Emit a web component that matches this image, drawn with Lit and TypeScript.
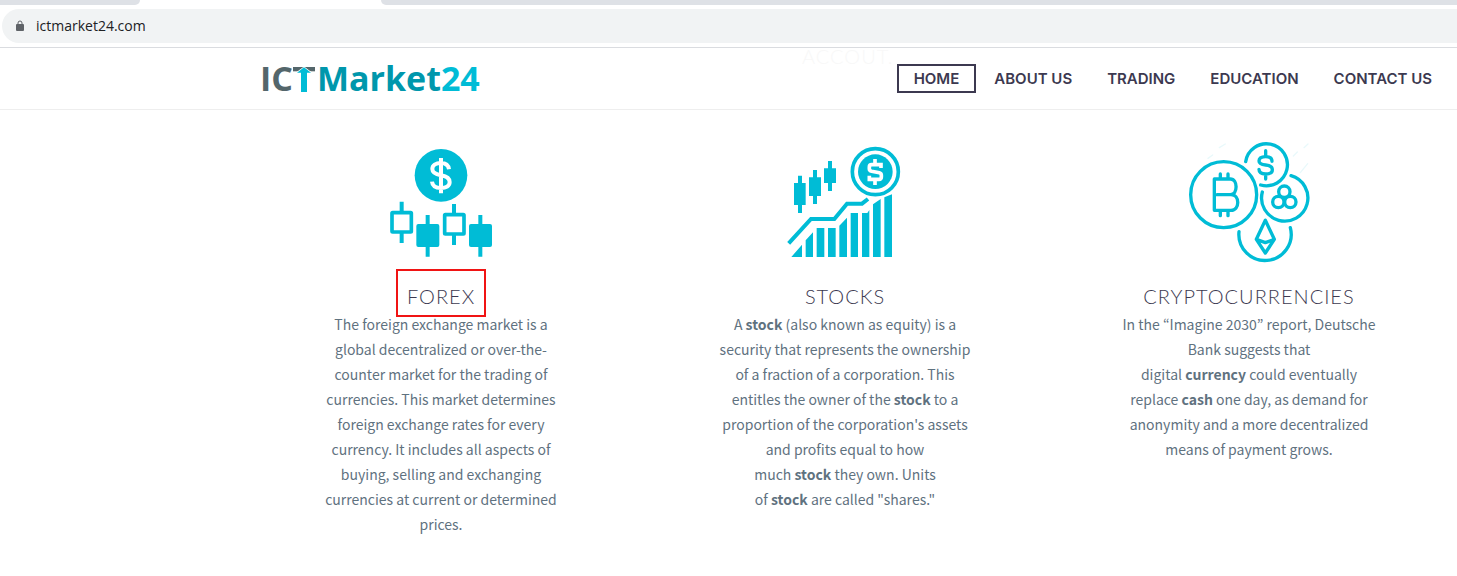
import { LitElement, html, css, svg } from "lit";
import { customElement } from "lit/decorators.js";

const forexIcon = svg`
  <svg class="icon" width="122" height="125" viewBox="0 0 366 375" fill="#00bcd6" aria-hidden="true">
    <circle cx="183" cy="106" r="79" />
    <path d="M207 88C205 73 194 69 183 69C167 69 157 76 157 87C157 99 167 103 183 106C199 109 209 114 209 126C209 138 198 144 183 144C167 144 157 137 156 125M183 54V160" fill="none" stroke="#fff" stroke-width="12" />
    <g fill="none" stroke="#00bcd6" stroke-width="10">
      <rect x="36" y="218" width="58" height="58" rx="2" stroke-width="11" />
      <path d="M65 185V216M65 278V309M222 192V222M222 284V315M143 225V350M301 225V350" stroke-width="12" />
      <rect x="194" y="224" width="58" height="58" rx="2" stroke-width="11" />
    </g>
    <rect x="109" y="252" width="69" height="69" rx="6" />
    <rect x="267" y="252" width="69" height="69" rx="6" />
  </svg>`;

const stocksIcon = svg`
  <svg class="icon" width="130" height="125" viewBox="0 0 390 375" fill="#00bcd6" aria-hidden="true">
    <path d="M54 107h12v22h11v66H66v24H54v-24H42v-66h12zM99 90h12v22h12v56h-12v24H99v-24H87v-56h12zM144 63h12v22h12v44h-12v24h-12v-24h-12V85h12z" />
    <path d="M26 310L93 237H163L201 191H246L264 177" fill="none" stroke="#00bcd6" stroke-width="12" />
    <path d="M34 351L66 314V351ZM77 301L99 277V351H77ZM110 264H133V351H110ZM144 264H167V351H144ZM178 257L201 233V351H178ZM212 219H234V351H212ZM246 219H262L268 210V351H246ZM279 193L302 177V351H279ZM313 172L336 163V351H313Z" />
    <circle cx="286" cy="95" r="69" fill="none" stroke="#00bcd6" stroke-width="11" />
    <circle cx="286" cy="95" r="52" />
    <path d="M303 84V74H275Q268 74 268 81V87Q268 92 275 94L298 98Q304 100 304 105V111Q304 118 297 118H268V107M285 57V73M285 119V135" fill="none" stroke="#fff" stroke-width="11" />
  </svg>`;

const cryptoIcon = svg`
  <svg class="icon" width="138" height="125" viewBox="0 15 414 375" fill="none" stroke="#00bcd6" stroke-width="10" stroke-linecap="round" stroke-linejoin="round" aria-hidden="true">
    <path d="M84 70L98 60M118 38L136 27M340 63L352 51M372 38L384 27M361 113L383 86" stroke="#e9f9fb" stroke-width="4" />
    <circle cx="131" cy="179" r="99" />
    <path d="M103 132H151C174 132 174 179 151 179H111H153C180 179 180 226 153 226H103Z" />
    <path d="M121 117V130M144 117V130M121 229V242M144 229V242" />
    <path d="M197 80A63 63 0 1 1 242 150" />
    <path d="M276 79C276 69 268 65 257 65C244 65 237 70 237 78C237 87 246 89 257 90C270 91 277 95 277 104C277 113 269 117 257 117C244 117 237 112 237 103M257 47V63M257 119V132" />
    <path d="M333 122A69.5 69.5 0 1 1 247 171" />
    <g stroke-width="10">
      <circle cx="313" cy="170" r="17" />
      <circle cx="295" cy="201" r="17" />
      <circle cx="331" cy="201" r="17" />
    </g>
    <path d="M177 290A78.5 78.5 0 1 0 331 278" />
    <path d="M256 256L229 313L256 354L283 313ZM229 313L256 323L283 313" />
  </svg>`;

@customElement("app-root")
export class AppRoot extends LitElement {
  static styles = css`
    :host {
      display: block;
      min-height: 100vh;
      background: #fff;
      color: #5f727f;
      font-family: "Noto Sans CJK KR", sans-serif;
    }
    * { box-sizing: border-box; }
    .browser { border-bottom: 1px solid #dadce0; padding-bottom: 4px; }
    .tabs { display: flex; gap: 241px; height: 5px; }
    .tab { background: #dee1e6; border-radius: 0 0 8px 0; width: 140px; }
    .tab.rest { flex: 1; border-radius: 0 0 0 8px; }
    .address {
      display: flex;
      align-items: center;
      gap: 12px;
      height: 34px;
      margin: 4px 0 0 2px;
      padding-left: 14px;
      border-radius: 17px 0 0 17px;
      background: #f1f3f4;
    }
    .url {
      flex: 1;
      border: 0;
      padding: 0;
      outline: 0;
      background: transparent;
      color: #202124;
      font: 14px/20px "Open Sans", sans-serif;
    }
    .header {
      position: relative;
      display: flex;
      justify-content: space-between;
      align-items: center;
      height: 62px;
      padding: 0 8px 0 260px;
      border-bottom: 1px solid #eee;
    }
    .ghost {
      position: absolute;
      top: -5px;
      left: 802px;
      color: #f8f8f8;
      font: 300 20px/26px Lato, sans-serif;
      letter-spacing: 1px;
    }
    .logo {
      display: flex;
      align-items: center;
      padding-bottom: 2px;
      color: #0097ac;
      font: 700 34px/40px "Open Sans", sans-serif;
      text-decoration: none;
    }
    .logo .ict { color: #54666b; }
    .logo .num { color: #00bcd6; }
    .stem { margin-right: 2px; }
    .nav { display: flex; gap: 1px; }
    .link {
      border: 2px solid transparent;
      padding: 0 15px;
      color: #3c3950;
      font: 600 15px/25px Inter, sans-serif;
      text-decoration: none;
      white-space: nowrap;
    }
    .link.active { border-color: #3c3950; }
    .markets {
      display: grid;
      grid-template-columns: repeat(3, 1fr);
      padding: 30px 6px 30px 239px;
    }
    .market { display: flex; flex-direction: column; align-items: center; text-align: center; }
    .icon { display: block; }
    .title {
      position: relative;
      margin: 16px 0 1px;
      color: #3c3950;
      font: 300 20px/30px Lato, sans-serif;
      letter-spacing: 1px;
    }
    .mark {
      position: absolute;
      inset: -12px -11px -6px;
      border: 2px solid #f01414;
    }
    .text { margin: 0; max-width: 256px; font-size: 14px; line-height: 25px; }
  `;

  render() {
    return html`
      <div class="browser">
        <div class="tabs"><div class="tab"></div><div class="tab rest"></div></div>
        <div class="address">
          <svg width="8" height="12" viewBox="0 0 8 12" aria-hidden="true">
            <path d="M2 5V3a2 2 0 0 1 4 0V5" fill="none" stroke="#5f6368" />
            <rect y="4" width="8" height="7" rx="1" fill="#5f6368" />
          </svg>
          <input class="url" aria-label="Address" value="ictmarket24.com" readonly />
        </div>
      </div>
      <header class="header">
        <span class="ghost">ACCOUT.</span>
        <a class="logo" href="#" aria-label="ICTMarket24"><span class="ict">IC</span><svg class="stem" width="22" height="28" viewBox="0 0 66 84" aria-hidden="true">
            <path d="M0 9H66V22H0Z" fill="#54666b" />
            <path d="M33 10L54 26H42V84H24V26H12Z" fill="#00bcd6" stroke="#fff" stroke-width="4" paint-order="stroke" />
          </svg><span>Market</span><span class="num">24</span></a>
        <nav class="nav">
          <a class="link active" href="#">HOME</a>
          <a class="link" href="#">ABOUT US</a>
          <a class="link" href="#">TRADING</a>
          <a class="link" href="#">EDUCATION</a>
          <a class="link" href="#">CONTACT US</a>
        </nav>
      </header>
      <main class="markets">
        <section class="market">
          ${forexIcon}
          <h2 class="title">FOREX<span class="mark"></span></h2>
          <p class="text">The foreign exchange market is a global decentralized or over-the-counter market for the trading of currencies. This market determines foreign exchange rates for every currency. It includes all aspects of buying, selling and exchanging currencies at current or determined prices.</p>
        </section>
        <section class="market">
          ${stocksIcon}
          <h2 class="title">STOCKS</h2>
          <p class="text">A <b>stock</b> (also known as equity) is a security that represents the ownership of a fraction of a corporation. This entitles the owner of the <b>stock</b> to a proportion of the corporation's assets and profits equal to how much&nbsp;<b>stock</b>&nbsp;they own. Units of&nbsp;<b>stock</b>&nbsp;are called "shares."</p>
        </section>
        <section class="market">
          ${cryptoIcon}
          <h2 class="title">CRYPTOCURRENCIES</h2>
          <p class="text">In the “Imagine 2030” report, Deutsche Bank suggests that digital&nbsp;<b>currency</b>&nbsp;could eventually replace&nbsp;<b>cash</b>&nbsp;one day, as demand for anonymity and a more decentralized means of payment grows.</p>
        </section>
      </main>
    `;
  }
}
